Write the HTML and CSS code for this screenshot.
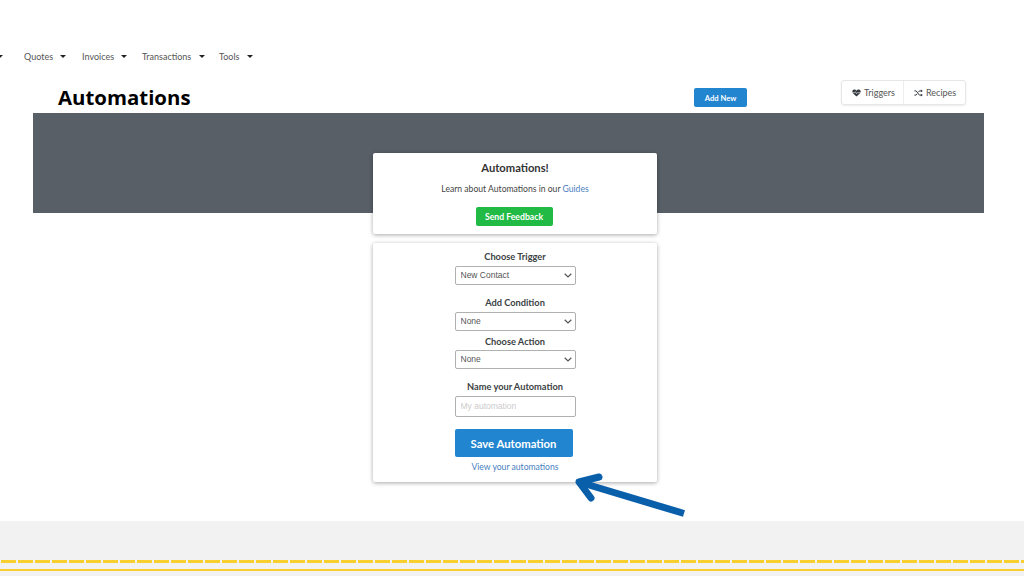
FILE: index.html
```html
<!DOCTYPE html>
<html lang="en">
<head>
    <meta charset="UTF-8">
    <title>Automations</title>
    <link rel="stylesheet" href="styles.css">
</head>
<body>
    <nav class="topnav">
        <span class="caret caret-cut"></span>
        <a class="nav-item nav-quotes">Quotes <span class="caret"></span></a>
        <a class="nav-item nav-invoices">Invoices <span class="caret"></span></a>
        <a class="nav-item nav-transactions">Transactions <span class="caret"></span></a>
        <a class="nav-item">Tools <span class="caret"></span></a>
    </nav>

    <div class="title-row">
        <h1>Automations</h1>
        <button class="add-btn">Add New</button>
        <div class="tabs">
            <a class="tab">
                <svg class="tab-icon" viewBox="0 0 12 10" width="9" height="8">
                    <path d="M6 9.6 1.2 5.2C-.4 3.4.6.4 3 .4c1.300 0 2.300.7 3 1.700C6.700 1.100 7.700.4 9 .4c2.400 0 3.400 3 1.800 4.800z" fill="#33383d"/>
                    <path d="M.6 4.600h3l1-1.300 1.400 2.700 1.200-1.400h4.200" fill="none" stroke="#fff" stroke-width=".8"/>
                </svg>
                Triggers
            </a>
            <a class="tab">
                <svg class="tab-icon" viewBox="0 0 12 10" width="9" height="8">
                    <path d="M.5 2.200h2.300l4.400 5.600h2.300M.5 7.800h2.300l1.400-1.800M5.800 4l1.400-1.800h2.300" fill="none" stroke="#33383d" stroke-width="1.300"/>
                    <path d="M9.200.3 11.800 2.200 9.200 4.100zM9.200 5.900l2.600 1.900-2.600 1.900z" fill="#33383d"/>
                </svg>
                Recipes
            </a>
        </div>
    </div>

    <div class="band"></div>

    <main class="cards">
        <section class="card intro-card">
            <h2>Automations!</h2>
            <p>Learn about Automations in our <a class="link">Guides</a></p>
            <button class="feedback-btn">Send Feedback</button>
        </section>

        <section class="card form-card">
            <label class="field-label label-trigger">Choose Trigger</label>
            <div class="select-wrap">
                <select class="field-select"><option>New Contact</option></select>
                <svg class="chevron" viewBox="0 0 8 5" width="8" height="5"><path d="M.7.8 4 4 7.300.8" fill="none" stroke="#555" stroke-width="1.200"/></svg>
            </div>
            <label class="field-label label-condition">Add Condition</label>
            <div class="select-wrap">
                <select class="field-select"><option>None</option></select>
                <svg class="chevron" viewBox="0 0 8 5" width="8" height="5"><path d="M.7.8 4 4 7.300.8" fill="none" stroke="#555" stroke-width="1.200"/></svg>
            </div>
            <label class="field-label label-action">Choose Action</label>
            <div class="select-wrap">
                <select class="field-select"><option>None</option></select>
                <svg class="chevron" viewBox="0 0 8 5" width="8" height="5"><path d="M.7.8 4 4 7.300.8" fill="none" stroke="#555" stroke-width="1.200"/></svg>
            </div>
            <label class="field-label label-name">Name your Automation</label>
            <input class="field-input" type="text" placeholder="My automation">
            <button class="save-btn">Save Automation</button>
            <a class="link view-link">View your automations</a>
        </section>
    </main>

    <footer class="footer">
        <div class="line-dashed"></div>
        <div class="line-solid"></div>
    </footer>

    <svg class="arrow" viewBox="0 0 120 50" width="120" height="50">
        <path d="M112 40.500 7 9" fill="none" stroke="#0a5fab" stroke-width="7"/>
        <path d="M27 4 7 9 19 25" fill="none" stroke="#0a5fab" stroke-width="7" stroke-linecap="round" stroke-linejoin="round"/>
    </svg>
</body>
</html>
```

FILE: styles.css
```css
html, body {
    margin: 0;
    padding: 0;
}
body {
    position: relative;
    width: 1024px;
    height: 576px;
    overflow: hidden;
    background: #fff;
    font-family: Lato, "Liberation Sans", sans-serif;
    color: #3b3f44;
}
.topnav {
    display: flex;
    align-items: center;
    height: 14px;
    padding-top: 49px;
    padding-bottom: 1px;
    font-family: Lato, sans-serif;
    font-size: 9px;
    color: #555;
}
.caret {
    display: inline-block;
    width: 0;
    height: 0;
    margin-left: 5px;
    vertical-align: 2px;
    border-left: 3px solid transparent;
    border-right: 3px solid transparent;
    border-top: 3px solid #222;
}
.caret-cut {
    margin-left: -3px;
    margin-right: 21px;
}
.nav-item {
    white-space: nowrap;
}
.nav-quotes {
    width: 58px;
}
.nav-invoices {
    width: 60px;
}
.nav-transactions {
    width: 77px;
}
.title-row {
    display: grid;
    grid-template-columns: 636px 147px 125px;
    align-items: start;
    height: 49px;
    padding-left: 58px;
}
.title-row h1 {
    margin: 20px 0 0;
    font-family: "Open Sans", sans-serif;
    font-size: 20.400px;
    line-height: 26px;
    font-weight: 700;
    color: #000;
}
.add-btn {
    width: 53px;
    height: 19px;
    margin-top: 24px;
    padding: 0;
    border: none;
    border-radius: 2px;
    background: #2185d0;
    color: #fff;
    font-family: Lato, sans-serif;
    font-size: 7.600px;
    font-weight: 700;
}
.tabs {
    display: flex;
    height: 25px;
    margin-top: 16px;
    border: 1px solid #e6e6e6;
    border-radius: 3px;
    box-shadow: 0 1px 2px rgba(0,0,0,0.08);
    box-sizing: border-box;
}
.tab {
    display: flex;
    flex: 1;
    align-items: center;
    gap: 3px;
    padding-left: 10px;
    font-size: 9px;
    color: #555;
}
.tab + .tab {
    border-left: 1px solid #eee;
}
.band {
    width: 951px;
    height: 100px;
    margin-left: 33px;
    background: #585f67;
}
.cards {
    display: flex;
    flex-direction: column;
    gap: 9px;
    width: 284px;
    margin: -60px 0 0 373px;
}
.card {
    display: flex;
    flex-direction: column;
    align-items: center;
    box-sizing: border-box;
    background: #fff;
    border-radius: 2px;
    box-shadow: 0 1px 4px rgba(0,0,0,0.35);
}
.intro-card {
    position: relative;
    height: 81px;
    padding-top: 8px;
}
.intro-card h2 {
    margin: 0;
    font-size: 11.200px;
    line-height: 14px;
    font-weight: 700;
    color: #333;
}
.intro-card p {
    margin: 8px 0 0;
    font-size: 8.600px;
    line-height: 12px;
    color: #444;
}
.link {
    color: #4a7fc1;
}
.feedback-btn {
    width: 77px;
    height: 19px;
    margin: 12px 2px 0 0;
    padding: 0;
    border: none;
    border-radius: 2px;
    background: #21ba45;
    color: #fff;
    font-family: Lato, sans-serif;
    font-size: 8.700px;
    font-weight: 700;
}
.form-card {
    height: 239px;
}
.field-label {
    font-size: 9.250px;
    line-height: 12px;
    font-weight: 700;
    color: #3b3f44;
}
.label-trigger {
    margin-top: 8px;
}
.label-condition {
    margin-top: 12px;
}
.label-action {
    margin-top: 5px;
    margin-bottom: -1px;
}
.label-name {
    margin-top: 12px;
}
.select-wrap {
    position: relative;
    height: 19px;
    margin-top: 3px;
}
.field-select {
    display: block;
    width: 121px;
    height: 19px;
    padding: 0 0 1px 5px;
    border: 1px solid #b0b0b0;
    border-radius: 2px;
    background: #fff;
    appearance: none;
    font-family: "Liberation Sans", Arial, sans-serif;
    font-size: 8.500px;
    color: #555;
}
.chevron {
    position: absolute;
    right: 4px;
    top: 7px;
}
.field-input {
    width: 121px;
    height: 21px;
    margin-top: 3px;
    padding: 0 5px 1px;
    box-sizing: border-box;
    border: 1px solid #b0b0b0;
    border-radius: 2px;
    font-family: "Liberation Sans", Arial, sans-serif;
    font-size: 8.500px;
}
.field-input::placeholder {
    color: #ccc;
}
.save-btn {
    width: 118px;
    height: 28px;
    margin: 12px 3px 0 0;
    padding: 0;
    border: none;
    border-radius: 2px;
    background: #2185d0;
    color: #fff;
    font-family: Lato, sans-serif;
    font-size: 11.300px;
    font-weight: 700;
}
.view-link {
    margin-top: 4px;
    font-size: 8.600px;
    line-height: 12px;
}
.footer {
    box-sizing: border-box;
    height: 55px;
    margin-top: 39px;
    padding-top: 39px;
    background: #f2f2f2;
}
.line-dashed {
    height: 3px;
    background: repeating-linear-gradient(90deg, #f2f2f2 0 1px, #f9cf2f 1px 16px, #f2f2f2 16px 17px);
}
.line-solid {
    height: 2px;
    margin-top: 6px;
    background: #f9cf2f;
}
/* pointer drawn on top of the screenshot */
.arrow {
    position: absolute;
    left: 572px;
    top: 473px;
}
```
